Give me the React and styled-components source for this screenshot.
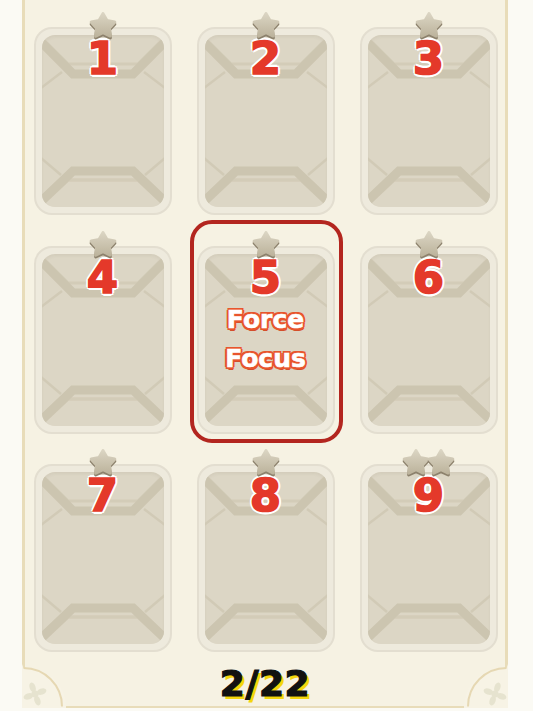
import React from "react";
import styled, { createGlobalStyle } from "styled-components";

const GlobalStyle = createGlobalStyle`
  html, body {
    margin: 0;
    padding: 0;
    width: 533px;
    height: 711px;
    overflow: hidden;
    background: #fbfaf4;
    font-family: "DejaVu Sans", "Liberation Sans", sans-serif;
  }
  * { box-sizing: border-box; }
`;

const Page = styled.div`
  width: 533px;
  height: 711px;
  display: flex;
  padding-left: 22px;
`;

const Panel = styled.div`
  position: relative;
  width: 486px;
  height: 708px;
  background: #f6f2e3;
  border-left: 3px solid #e8dcb9;
  border-right: 3px solid #e8dcb9;
  border-bottom: 2px solid #e8dcb9;
  display: flex;
  flex-direction: column;
  align-items: center;
  padding-top: 11px;
`;

const Grid = styled.div`
  display: grid;
  grid-template-columns: repeat(3, 138px);
  column-gap: 25px;
  row-gap: 14.5px;
  margin-left: 1px;
`;

const Cell = styled.div`
  position: relative;
  display: flex;
  flex-direction: column;
  align-items: center;
`;

const StarRow = styled.div`
  display: flex;
  height: 30px;
  margin-bottom: -14px;
  position: relative;
  z-index: 2;
`;

const StarIcon = styled.svg`
  width: 30px;
  height: 30px;
  margin: 0 -2.5px;
`;

const Card = styled.div`
  width: 138px;
  height: 188px;
  border-radius: 18px;
  background: #eeeadd;
  border: 2px solid #e3ded0;
  padding: 6px;
`;

const Inner = styled.div`
  position: relative;
  height: 100%;
  border-radius: 13px;
  background: #dcd6c5;
  box-shadow: inset 0 2px 3px rgba(120, 105, 80, 0.08);
  display: flex;
  flex-direction: column;
  align-items: center;
`;

const DecoClip = styled.div`
  position: absolute;
  inset: 0;
  border-radius: 13px;
  overflow: hidden;
`;

const Deco = styled.svg`
  display: block;
  width: 100%;
  height: 100%;
`;

const Number = styled.div`
  position: relative;
  margin-top: 1px;
  font-size: 45px;
  line-height: 1;
  font-weight: 700;
  color: #e4392a;
  -webkit-text-stroke: 1.6px #e4392a;
  text-shadow: 2.6px 0 #fff, -2.6px 0 #fff, 0 2.6px #fff, 0 -2.6px #fff,
    1.9px 1.9px #fff, -1.9px 1.9px #fff, 1.9px -1.9px #fff, -1.9px -1.9px #fff;
`;

const Label = styled.div`
  position: relative;
  font-size: 25px;
  line-height: 39px;
  font-weight: 700;
  color: #fff;
  -webkit-text-stroke: 0.6px #fff;
  text-shadow: 2.3px 0 #e8552d, -2.3px 0 #e8552d, 0 2.3px #e8552d, 0 -2.3px #e8552d,
    1.7px 1.7px #e8552d, -1.7px 1.7px #e8552d, 1.7px -1.7px #e8552d,
    -1.7px -1.7px #e8552d, 1px 3.2px #d44e2a;
`;

const Ring = styled.div`
  position: absolute;
  top: -10px;
  left: -7px;
  right: -8px;
  bottom: -9px;
  border: 4px solid #b3261f;
  border-radius: 22px;
  pointer-events: none;
`;

const Counter = styled.div`
  margin-top: 14px;
  font-size: 36px;
  line-height: 1;
  font-weight: 700;
  color: #111;
  -webkit-text-stroke: 1.2px #111;
  letter-spacing: 0.5px;
  text-shadow: 3px 3px 0 #f4d60c;
`;

const Corner = styled.svg`
  position: absolute;
  bottom: -2px;
  width: 44px;
  height: 44px;
  ${(p) => (p.$right ? "right: -3px; transform: scaleX(-1);" : "left: -3px;")}
`;

const starPts =
  "13,1.5 16.64,7.98 23.94,9.45 18.9,14.92 19.76,22.3 13,19.2 6.24,22.3 7.1,14.92 2.06,9.45 9.36,7.98";

function Star({ id }) {
  return (
    <StarIcon viewBox="-1 -1 28 28">
      <defs>
        <linearGradient id={`sg${id}`} x1="0" y1="0" x2="0" y2="1">
          <stop offset="0" stopColor="#dad4c2" />
          <stop offset="1" stopColor="#bdb49d" />
        </linearGradient>
      </defs>
      <polygon
        points={starPts}
        transform="translate(0 1.8)"
        fill="#8c816c"
        stroke="#8c816c"
        strokeWidth="3"
        strokeLinejoin="round"
      />
      <polygon
        points={starPts}
        fill={`url(#sg${id})`}
        stroke={`url(#sg${id})`}
        strokeWidth="3"
        strokeLinejoin="round"
      />
    </StarIcon>
  );
}

function CardDeco() {
  return (
    <Deco viewBox="0 0 122 172" preserveAspectRatio="none">
      <g fill="none" strokeLinejoin="miter">
        <polyline points="-6,-3 26,29 96,29 128,-3" stroke="#d3ccb8" strokeWidth="3" />
        <polyline points="-6,2 31,39 91,39 128,2" stroke="#ccc5b0" strokeWidth="9" />
        <line x1="20" y1="37" x2="-1" y2="53" stroke="#d1cab6" strokeWidth="2.5" />
        <line x1="102" y1="37" x2="123" y2="53" stroke="#d1cab6" strokeWidth="2.5" />
        <polyline points="-6,175 26,145 96,145 128,175" stroke="#d3ccb8" strokeWidth="3.5" />
        <polyline points="-6,171 31,136 91,136 128,171" stroke="#ccc5b0" strokeWidth="9" />
        <line x1="-1" y1="123" x2="19" y2="140" stroke="#d1cab6" strokeWidth="2.5" />
        <line x1="123" y1="123" x2="103" y2="140" stroke="#d1cab6" strokeWidth="2.5" />
      </g>
    </Deco>
  );
}

function CornerOrnament({ right }) {
  return (
    <Corner $right={right} viewBox="0 0 44 44">
      <path d="M0 0 L0 44 L44 44 L44 42 A39 39 0 0 0 1.5 4 Z" fill="#f7f3e5" />
      <path d="M1.5 4 A38.5 38.5 0 0 1 40 42.5" fill="none" stroke="#e6d8b3" strokeWidth="2" />
      <g fill="#e6e3cf" transform="translate(13 30) rotate(-20)">
        <ellipse cx="0" cy="-7" rx="3" ry="5" />
        <ellipse cx="0" cy="7" rx="3" ry="5" />
        <ellipse cx="-7" cy="0" rx="5" ry="3" />
        <ellipse cx="7" cy="0" rx="5" ry="3" />
        <circle cx="0" cy="0" r="3.5" />
      </g>
    </Corner>
  );
}

const cards = [
  { n: 1, stars: 1 },
  { n: 2, stars: 1 },
  { n: 3, stars: 1 },
  { n: 4, stars: 1 },
  { n: 5, stars: 1, focus: true },
  { n: 6, stars: 1 },
  { n: 7, stars: 1 },
  { n: 8, stars: 1 },
  { n: 9, stars: 2 },
];

export default function App() {
  return (
    <>
      <GlobalStyle />
      <Page>
        <Panel>
          <Grid>
            {cards.map((c) => (
              <Cell key={c.n}>
                {c.focus && <Ring />}
                <StarRow>
                  {Array.from({ length: c.stars }).map((_, i) => (
                    <Star key={i} id={`${c.n}-${i}`} />
                  ))}
                </StarRow>
                <Card>
                  <Inner>
                    <DecoClip>
                      <CardDeco />
                    </DecoClip>
                    <Number>{c.n}</Number>
                    {c.focus && (
                      <>
                        <Label>Force</Label>
                        <Label>Focus</Label>
                      </>
                    )}
                  </Inner>
                </Card>
              </Cell>
            ))}
          </Grid>
          <Counter>2/22</Counter>
          <CornerOrnament />
          <CornerOrnament right />
        </Panel>
      </Page>
    </>
  );
}
